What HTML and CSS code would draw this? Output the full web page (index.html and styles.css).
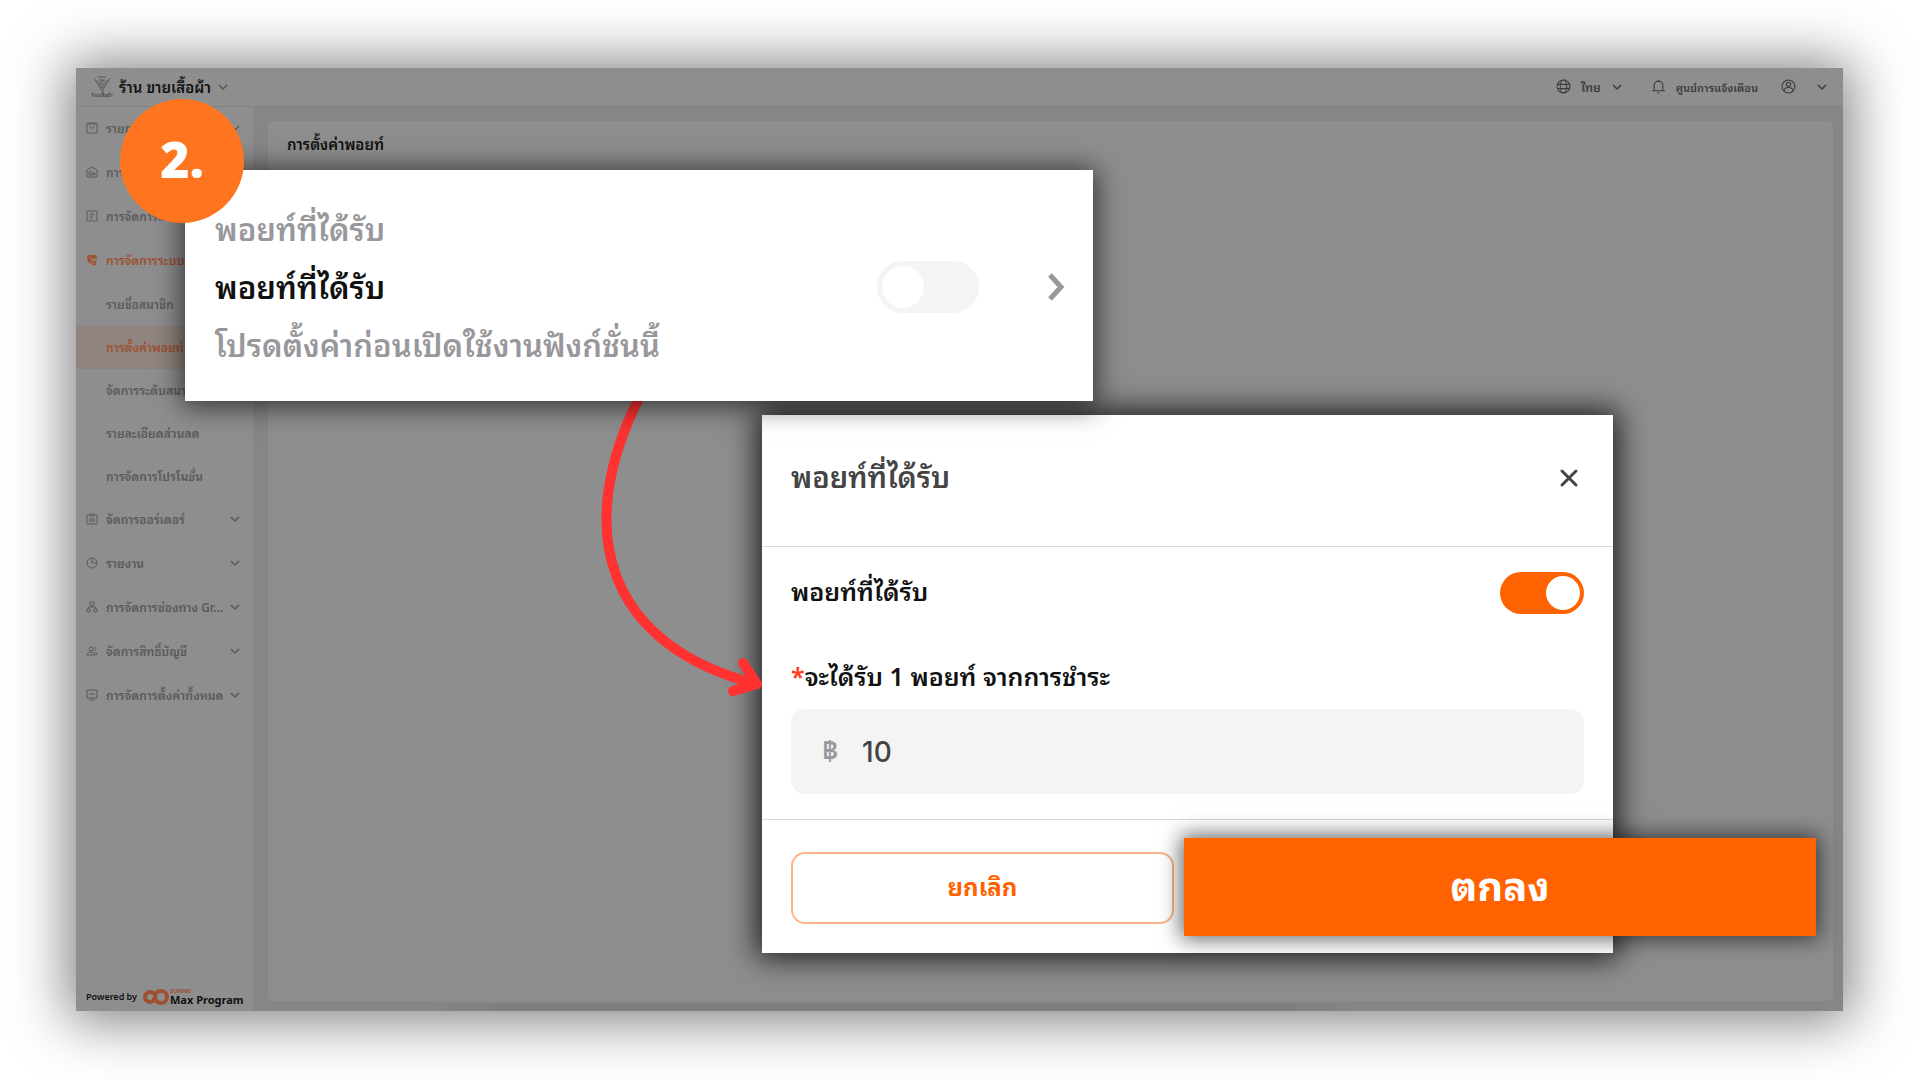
FILE: index.html
```html
<!DOCTYPE html>
<html lang="th">
<head>
	<meta charset="utf-8">
	<title>การตั้งค่าพอยท์</title>
	<meta content="width=device-width, initial-scale=1" name="viewport">
	<link rel="stylesheet" href="styles.css">
</head>
<body>
<svg class="sprite" aria-hidden="true">
	<symbol id="down" viewBox="0 0 12 12"><path d="M2 4l4 4 4-4"></path></symbol>
</svg>

<div class="window">
	<header class="topbar">
		<button class="store" type="button">
			<span class="store-logo">
				<svg aria-hidden="true" height="16" viewBox="0 0 18 16" width="18">
					<path d="M1 2l8 13 8-13M4 4l5 8 5-8M5 1h8M6 4h6M7 6l4-1M7 8h4"></path>
				</svg>
				<small>ร้านเสื้อผ้า</small>
			</span>
			<span>ร้าน ขายเสื้อผ้า</span>
			<svg aria-hidden="true" class="icon down"><use href="#down"></use></svg>
		</button>
		<div class="topbar-right">
			<button class="lang" type="button">
				<svg aria-hidden="true" class="icon icon-lg" viewBox="0 0 14 14">
					<circle cx="7" cy="7" r="6"></circle>
					<ellipse cx="7" cy="7" rx="3" ry="6"></ellipse>
					<path d="M1 5h12M1 9h12"></path>
				</svg>
				<span>ไทย</span>
				<svg aria-hidden="true" class="icon down"><use href="#down"></use></svg>
			</button>
			<a class="notice" href="#">
				<svg aria-hidden="true" class="icon icon-lg" viewBox="0 0 14 14">
					<path d="M1 11h12M3 11V6a4 4 0 0 1 8 0v5M7 2V1M6 13h2"></path>
				</svg>
				<span>ศูนย์การแจ้งเตือน</span>
			</a>
			<button class="account" type="button" aria-label="บัญชี">
				<svg aria-hidden="true" class="icon icon-lg" viewBox="0 0 14 14">
					<circle cx="7" cy="7" r="6"></circle>
					<circle cx="7" cy="5" r="2"></circle>
					<path d="M3 11c0-4 8-4 8 0"></path>
				</svg>
				<svg aria-hidden="true" class="icon down"><use href="#down"></use></svg>
			</button>
		</div>
	</header>

	<div class="body">
		<nav class="sidebar">
			<ul class="menu">
				<li><a href="#">
					<svg aria-hidden="true" class="icon" viewBox="0 0 12 12"><path d="M1 2h10v9H1zM1 2l1-1h8l1 1M4 4c0 3 4 3 4 0"></path></svg>
					<span>รายการ</span>
					<svg aria-hidden="true" class="icon down"><use href="#down"></use></svg>
				</a></li>
				<li><a href="#">
					<svg aria-hidden="true" class="icon" viewBox="0 0 12 12"><path d="M1 11V4l5-3 5 3v7zM3 9V6h3v3zM7 9V7h2v2z"></path></svg>
					<span>การ</span>
				</a></li>
				<li><a href="#">
					<svg aria-hidden="true" class="icon" viewBox="0 0 12 12"><path d="M1 1h10v3l-1 2 1 2v3H1V8l1-2-1-2zM4 4h4M4 6h3M4 8h3"></path></svg>
					<span>การจัดการส่วนลด</span>
				</a></li>
				<li class="open"><a href="#">
					<svg aria-hidden="true" class="icon members" viewBox="0 0 12 12">
						<path d="M1 4q0-3 3-3h4q3 0 3 3l-1 4-4 3-4-3z"></path>
						<path class="cut" d="M3 3l3 2h5"></path>
						<circle class="cut" cx="8" cy="9" r="3"></circle>
						<path class="cut" d="M7 9h2"></path>
					</svg>
					<span>การจัดการระบบสมาชิก</span>
				</a>
					<ul class="sub-menu">
						<li><a href="#">รายชื่อสมาชิก</a></li>
						<li class="active"><a href="#">การตั้งค่าพอยท์</a></li>
						<li><a href="#">จัดการระดับสมาชิก</a></li>
						<li><a href="#">รายละเอียดส่วนลด</a></li>
						<li><a href="#">การจัดการโปรโมชั่น</a></li>
					</ul>
				</li>
				<li><a href="#">
					<svg aria-hidden="true" class="icon" viewBox="0 0 12 12"><path d="M4 2H1v9h10V2H8M4 1h4v2H4zM3 6h6M3 8h6"></path></svg>
					<span>จัดการออร์เดอร์</span>
					<svg aria-hidden="true" class="icon down"><use href="#down"></use></svg>
				</a></li>
				<li><a href="#">
					<svg aria-hidden="true" class="icon" viewBox="0 0 12 12"><circle cx="6" cy="6" r="5"></circle><path d="M6 1v5h5"></path></svg>
					<span>รายงาน</span>
					<svg aria-hidden="true" class="icon down"><use href="#down"></use></svg>
				</a></li>
				<li><a href="#">
					<svg aria-hidden="true" class="icon" viewBox="0 0 12 12"><path d="M4 1h4v3H4zM1 8h3v3H1zM8 8h3v3H8zM6 4v2M2 8V6h8v2"></path></svg>
					<span>การจัดการช่องทาง Gr...</span>
					<svg aria-hidden="true" class="icon down"><use href="#down"></use></svg>
				</a></li>
				<li><a href="#">
					<svg aria-hidden="true" class="icon" viewBox="0 0 12 12"><circle cx="5" cy="4" r="2"></circle><path d="M1 10c0-4 8-4 8 0zM8 2c2 0 2 3 0 3M9 7q2 0 2 3"></path></svg>
					<span>จัดการสิทธิ์บัญชี</span>
					<svg aria-hidden="true" class="icon down"><use href="#down"></use></svg>
				</a></li>
				<li><a href="#">
					<svg aria-hidden="true" class="icon" viewBox="0 0 12 12"><path d="M1 1h10v8H1zM3 11h6M3 6l2-2 2 2 2-2"></path></svg>
					<span>การจัดการตั้งค่าทั้งหมด</span>
					<svg aria-hidden="true" class="icon down"><use href="#down"></use></svg>
				</a></li>
			</ul>
			<div class="powered">
				<span>Powered by</span>
				<svg aria-hidden="true" height="16" viewBox="0 0 29 16" width="29">
					<path d="M13 5a5 5 0 1 0-1 7l3-5"></path>
					<circle cx="20" cy="8" r="6"></circle>
				</svg>
				<span class="brand"><small>SUNMI</small>Max Program</span>
			</div>
		</nav>
		<main class="content">
			<h1>การตั้งค่าพอยท์</h1>
		</main>
	</div>
</div>

<svg aria-hidden="true" class="pointer" height="304" viewBox="0 0 176 304" width="176">
	<path d="M50 1C-18 135 16 250 166 289M153 268l14 21-24 7"></path>
</svg>

<section class="card">
	<div class="card-text">
		<p>พอยท์ที่ได้รับ</p>
		<label for="points-off">พอยท์ที่ได้รับ</label>
		<p>โปรดตั้งค่าก่อนเปิดใช้งานฟังก์ชั่นนี้</p>
	</div>
	<input id="points-off" class="switch switch-lg" type="checkbox">
	<a class="next" href="#" aria-label="ตั้งค่า">
		<svg aria-hidden="true" height="28" viewBox="0 0 18 28" width="18"><path d="M3 2l11 12L3 26"></path></svg>
	</a>
</section>

<section class="modal">
	<header class="modal-head">
		<h2>พอยท์ที่ได้รับ</h2>
		<button class="close" type="button" aria-label="ปิด">
			<svg aria-hidden="true" height="20" viewBox="0 0 20 20" width="20"><path d="M3 3l14 14M17 3L3 17"></path></svg>
		</button>
	</header>
	<div class="modal-body">
		<div class="row">
			<label for="points-on">พอยท์ที่ได้รับ</label>
			<input id="points-on" class="switch" type="checkbox" checked>
		</div>
		<label class="amount-label" for="amount"><span class="required">*</span>จะได้รับ 1 พอยท์ จากการชำระ</label>
		<div class="amount">
			<span>฿</span>
			<input id="amount" type="text" value="10">
		</div>
	</div>
	<footer class="modal-foot">
		<button class="cancel" type="button">ยกเลิก</button>
		<button class="confirm" type="button">ตกลง</button>
	</footer>
</section>

<div class="step">2.</div>
</body>
</html>
```

FILE: styles.css
```css
* {
	box-sizing: border-box;
}

body {
	position: relative;
	margin: 0;
	padding: 68px 77px 69px 76px;
	min-height: 100vh;
	background: #fff;
	font-family: "Noto Sans", "Noto Sans Thai Looped", "Noto Looped Thai", "Noto Sans Thai", sans-serif;
}

ul {
	list-style: none;
	margin: 0;
	padding: 0;
}

h1, h2, p {
	margin: 0;
}

a {
	color: inherit;
	text-decoration: none;
}

button {
	border: none;
	padding: 0;
	background: none;
	color: inherit;
	font: inherit;
	cursor: pointer;
}

svg {
	flex: none;
	fill: none;
	stroke: currentColor;
}

.sprite {
	position: absolute;
	width: 0;
	height: 0;
}

.icon {
	width: 12px;
	height: 12px;
}

.icon-lg {
	width: 15px;
	height: 15px;
}

.down {
	stroke-width: 1.5;
}

/* dimmed back office */
.window {
	display: flex;
	flex-direction: column;
	min-height: calc(100vh - 137px);
	background: #868686;
	box-shadow: 0 2px 52px 8px rgba(0, 0, 0, .5);
	color: #5a5a5a;
	font-size: 12px;
	font-weight: 600;
}

.topbar {
	display: flex;
	justify-content: space-between;
	align-items: center;
	height: 39px;
	padding: 0 15px 1px;
	border-bottom: 1px solid #848484;
	background: #8e8e8e;
}

.store {
	display: flex;
	align-items: center;
	gap: 6px;
	color: #111;
	font-size: 15px;
	line-height: 24px;
}

.store .icon {
	color: #555;
}

.store-logo {
	display: flex;
	flex-direction: column;
	align-items: center;
	width: 22px;
	color: #444;
}

.store-logo svg {
	stroke-width: .7;
}

.store-logo small {
	font-size: 5px;
	line-height: 6px;
	white-space: nowrap;
}

.topbar-right,
.lang,
.notice,
.account {
	display: flex;
	align-items: center;
}

.topbar-right {
	color: #3c3c3c;
	font-size: 11px;
}

.lang,
.notice {
	gap: 10px;
}

.lang {
	margin-right: 28px;
	font-size: 12px;
}

.account {
	gap: 20px;
	margin-left: 15px;
	padding-left: 7px;
	border-left: 1px solid #888;
}

.body {
	display: flex;
	flex: 1;
	background: linear-gradient(90deg, transparent, #7e7e7e 8%, #7e7e7e 92%, transparent) 42% 100% / 53% 7px no-repeat #868686;
}

.sidebar {
	display: flex;
	flex-direction: column;
	justify-content: space-between;
	width: 177px;
	background: #8e8e8e;
}

.menu a {
	display: flex;
	align-items: center;
	gap: 8px;
	height: 44px;
	padding: 0 12px 3px 10px;
	white-space: nowrap;
}

/* long names may run up to the chevron without moving it */
.menu a span {
	flex: 1;
	min-width: 0;
}

.menu .down {
	margin-left: -8px;
}

.menu .sub-menu a {
	height: 43px;
	padding-left: 30px;
}

.open > a,
.active {
	color: #9e5030;
}

.active {
	background: #8f847f;
}

.members {
	fill: currentColor;
	stroke: none;
}

.members .cut {
	stroke: #8e8e8e;
}

.powered {
	display: flex;
	align-items: center;
	gap: 4px;
	padding: 0 10px 5px;
	color: #111;
	font-size: 9px;
	line-height: 12px;
	white-space: nowrap;
}

.powered svg {
	color: #9e5030;
	stroke-width: 4;
}

.brand {
	margin-left: -4px;
	font-size: 11px;
	font-weight: 700;
}

.brand small {
	display: block;
	color: #9e5030;
	font-size: 6px;
	line-height: 6px;
}

.content {
	flex: 1;
	margin: 14px 10px 10px 15px;
	padding: 11px 19px;
	border-radius: 6px;
	background: #8e8e8e;
}

h1 {
	color: #111;
	font-size: 15px;
	font-weight: 600;
	line-height: 24px;
}

/* arrow between the two panels */
.pointer {
	position: absolute;
	top: 395px;
	left: 590px;
	z-index: 2;
	color: #ff3131;
	stroke-width: 10;
	stroke-linecap: round;
	stroke-linejoin: round;
}

.switch {
	appearance: none;
	flex: none;
	display: flex;
	width: 84px;
	height: 42px;
	margin: 0;
	padding: 4px;
	border-radius: 21px;
	background: #f4f4f4;
}

.switch::before {
	content: "";
	width: 34px;
	border-radius: 50%;
	background: #fff;
}

.switch:checked {
	justify-content: flex-end;
	background: #ff6200;
}

.switch-lg {
	width: 102px;
	height: 52px;
	padding: 5px;
	border-radius: 26px;
}

.switch-lg::before {
	width: 42px;
}

.card {
	position: absolute;
	top: 170px;
	left: 185px;
	z-index: 3;
	display: flex;
	align-items: center;
	width: 47.3%;
	padding: 30px 28px 27px 30px;
	background: #fff;
	box-shadow: 0 2px 26px 3px rgba(0, 0, 0, .65);
}

.card-text {
	flex: 1;
	color: #98989c;
	font-size: 31px;
	font-weight: 600;
	line-height: 58px;
}

.card-text label {
	display: block;
	color: #111;
}

.next {
	display: flex;
	margin-left: 68px;
	color: #98989c;
}

.next svg {
	stroke-width: 5;
}

.modal {
	position: absolute;
	top: 415px;
	left: 762px;
	z-index: 1;
	width: 44.3%;
	background: #fff;
	box-shadow: 0 0 28px 5px rgba(0, 0, 0, .8);
	color: #111;
	font-size: 25px;
	font-weight: 600;
}

.modal-head {
	display: flex;
	justify-content: space-between;
	align-items: center;
	height: 132px;
	padding: 0 34px 5px 29px;
	border-bottom: 1px solid #d9d9d9;
	color: #444;
}

h2 {
	padding-bottom: 6px;
	font-size: 29px;
	font-weight: 600;
}

.close {
	display: flex;
}

.close svg {
	stroke-width: 3;
	stroke-linecap: round;
}

.modal-body {
	padding: 25px 29px;
}

.row {
	display: flex;
	justify-content: space-between;
	align-items: center;
	margin-bottom: 42px;
	line-height: 36px;
}

.row label {
	padding-bottom: 4px;
}

.amount-label {
	display: block;
	line-height: 40px;
}

.required {
	color: #ff3b22;
}

.amount {
	display: flex;
	align-items: center;
	gap: 24px;
	height: 85px;
	margin-top: 13px;
	padding: 0 31px;
	border-radius: 14px;
	background: #f4f4f4;
	color: #98989c;
}

.amount span {
	padding-bottom: 6px;
	font-size: 28px;
}

.amount input {
	flex: 1;
	min-width: 0;
	border: none;
	padding: 0;
	background: none;
	color: #444;
	font: 500 28px Inter, sans-serif;
}

.modal-foot {
	display: flex;
	align-items: center;
	gap: 10px;
	height: 134px;
	padding: 0 29px;
	border-top: 1px solid #d9d9d9;
}

.cancel {
	flex: none;
	width: 383px;
	height: 72px;
	margin-top: 3px;
	padding-bottom: 6px;
	border: 2px solid #ffb48a;
	border-radius: 14px;
	color: #ff6200;
	font-size: 24px;
	font-weight: 700;
}

/* the confirm button is enlarged past the edge of the modal */
.confirm {
	flex: none;
	width: 632px;
	height: 98px;
	padding-bottom: 8px;
	background: #ff6200;
	box-shadow: 0 0 20px 3px rgba(0, 0, 0, .6);
	color: #fff;
	font-size: 40px;
	font-weight: 700;
}

.step {
	position: absolute;
	top: 99px;
	left: 120px;
	z-index: 4;
	width: 124px;
	height: 124px;
	border-radius: 50%;
	background: #ff751f;
	color: #fff;
	font: 800 50px/120px "Open Sans", sans-serif;
	text-align: center;
}
```
